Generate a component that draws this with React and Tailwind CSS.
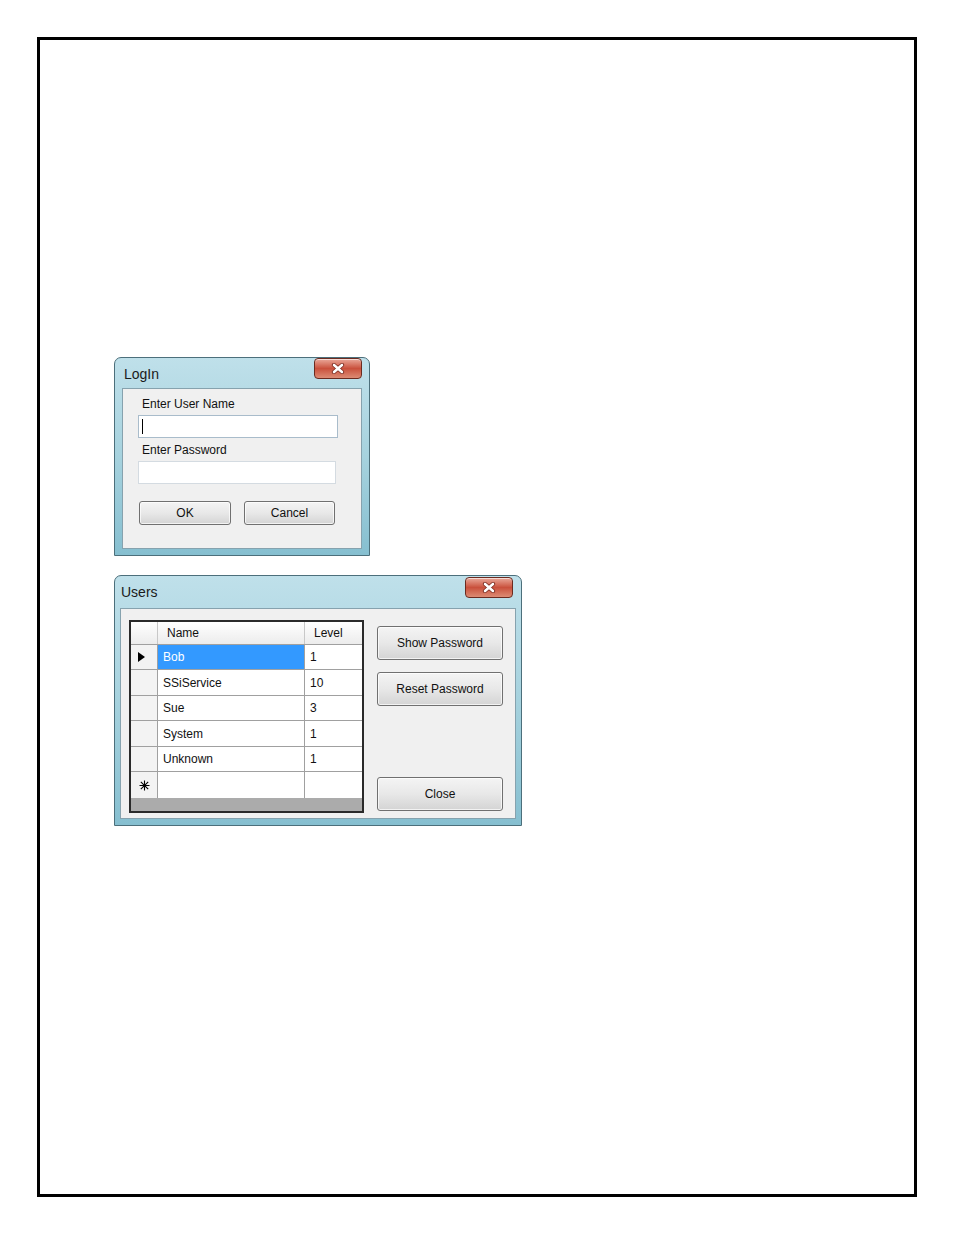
import React from "react";

const font = { fontFamily: '"Liberation Sans", Arial, sans-serif' };

function CloseBtn({ className = "" }) {
  return (
    <div className={`flex h-[21px] w-[48px] items-center justify-center rounded-[4px] border border-[#6b2b20] bg-gradient-to-b from-[#e9a89a] via-[#c9503c] to-[#dc8b74] shadow-[inset_0_1px_0_rgba(255,255,255,0.6)] ${className}`}>
      <svg width="14" height="11" viewBox="0 0 14 11">
        <path d="M3 2 L11 9 M11 2 L3 9" stroke="#7a2a1e" strokeWidth="4.2" strokeLinecap="round" />
        <path d="M3 2 L11 9 M11 2 L3 9" stroke="#ffffff" strokeWidth="2.6" strokeLinecap="round" />
      </svg>
    </div>
  );
}

function Btn({ children, className = "" }) {
  return (
    <div className={`flex items-center justify-center rounded-[3px] border border-[#707070] bg-gradient-to-b from-[#f4f4f4] via-[#e8e8e8] to-[#d4d4d4] text-[12px] text-[#111] shadow-[inset_0_0_0_1px_rgba(255,255,255,0.7)] ${className}`}>
      {children}
    </div>
  );
}

function LoginDialog() {
  return (
    <div className="flex h-[199px] w-[256px] flex-col rounded-t-[7px] border border-[#4c6f7b] bg-gradient-to-b from-[#bfe0ea] via-[#a6d2de] to-[#86bfd0] px-[7px] pb-[6px]">
      <div className="flex h-[30px] items-start justify-between">
        <span className="mt-[8px] ml-[2px] text-[14px] leading-[16px] text-[#1a1a1a]">LogIn</span>
        <CloseBtn />
      </div>
      <div className="flex-1 border border-[#86a2ae] bg-[#f0f0f0] pl-[15px] pt-[7px]">
        <div className="ml-[4px] text-[12px] leading-[16px] text-[#111]">Enter User Name</div>
        <div className="mt-[3px] flex h-[23px] w-[200px] items-center border border-[#a9bccb] bg-white pl-[3px]">
          <div className="h-[15px] w-[1px] bg-black" />
        </div>
        <div className="ml-[4px] mt-[4px] text-[12px] leading-[16px] text-[#111]">Enter Password</div>
        <div className="mt-[3px] h-[23px] w-[198px] border border-[#d4dbe1] bg-white" />
        <div className="ml-[1px] mt-[17px] flex gap-[13px]">
          <Btn className="h-[24px] w-[92px]">OK</Btn>
          <Btn className="h-[24px] w-[91px]">Cancel</Btn>
        </div>
      </div>
    </div>
  );
}

const rows = [
  { name: "Bob", level: "1", h: "h-[25px]" },
  { name: "SSiService", level: "10", h: "h-[26px]" },
  { name: "Sue", level: "3", h: "h-[25px]" },
  { name: "System", level: "1", h: "h-[26px]" },
  { name: "Unknown", level: "1", h: "h-[25px]" },
];

function Grid() {
  return (
    <div className="flex h-[193px] w-[235px] flex-col border-2 border-[#2a2a2a] bg-white text-[12px] text-[#111]">
      <div className="flex h-[23px] border-b border-[#a0a0a0] bg-gradient-to-b from-white to-[#ececec]">
        <div className="w-[27px] border-r border-[#c8c8c8]" />
        <div className="flex w-[147px] items-center border-r border-[#c8c8c8] pl-[9px]">Name</div>
        <div className="flex flex-1 items-center pl-[9px]">Level</div>
      </div>
      {rows.map((r, i) => (
        <div key={r.name} className={`flex ${r.h} border-b border-[#a0a0a0]`}>
          <div className="flex w-[27px] items-center border-r border-[#a0a0a0] bg-[#f3f3f3] pl-[7px]">
            {i === 0 && (
              <svg width="7" height="10" viewBox="0 0 7 10">
                <path d="M0 0 L7 5 L0 10 Z" fill="#000" />
              </svg>
            )}
          </div>
          <div className={`flex w-[147px] items-center border-r border-[#a0a0a0] pl-[5px] ${i === 0 ? "bg-[#3399ff] text-white" : ""}`}>
            {r.name}
          </div>
          <div className="flex flex-1 items-center pl-[5px]">{r.level}</div>
        </div>
      ))}
      <div className="flex h-[26px]">
        <div className="flex w-[27px] items-center border-r border-[#a0a0a0] bg-[#f3f3f3] pl-[8px]">
          <svg width="11" height="11" viewBox="0 0 11 11">
            <path d="M5.5 0.5 V10.5 M0.5 5.5 H10.5 M1.8 1.8 L9.2 9.2 M9.2 1.8 L1.8 9.2" stroke="#000" strokeWidth="1.1" />
          </svg>
        </div>
        <div className="w-[147px] border-r border-[#a0a0a0]" />
        <div className="flex-1" />
      </div>
      <div className="flex-1 bg-[#ababab]" />
    </div>
  );
}

function UsersDialog() {
  return (
    <div className="mt-[19px] flex h-[251px] w-[408px] flex-col rounded-t-[7px] border border-[#4c6f7b] bg-gradient-to-b from-[#bfe0ea] via-[#a6d2de] to-[#86bfd0] px-[5px] pb-[6px]">
      <div className="flex h-[32px] items-start justify-between">
        <span className="mt-[8px] ml-[1px] text-[14px] leading-[16px] text-[#1a1a1a]">Users</span>
        <CloseBtn className="mr-[3px] mt-[1px]" />
      </div>
      <div className="flex flex-1 items-start border border-[#86a2ae] bg-[#f0f0f0] pl-[8px] pt-[11px]">
        <Grid />
        <div className="ml-[13px] mt-[6px] flex h-[185px] flex-col">
          <Btn className="h-[34px] w-[126px]">Show Password</Btn>
          <Btn className="mt-[12px] h-[34px] w-[126px]">Reset Password</Btn>
          <Btn className="mt-auto h-[34px] w-[126px]">Close</Btn>
        </div>
      </div>
    </div>
  );
}

export default function App() {
  return (
    <div className="min-h-[1235px] w-[954px] bg-white pl-[37px] pt-[37px]" style={font}>
      <div className="h-[1160px] w-[880px] border-[3px] border-black pl-[74px] pt-[317px]">
        <LoginDialog />
        <UsersDialog />
      </div>
    </div>
  );
}
